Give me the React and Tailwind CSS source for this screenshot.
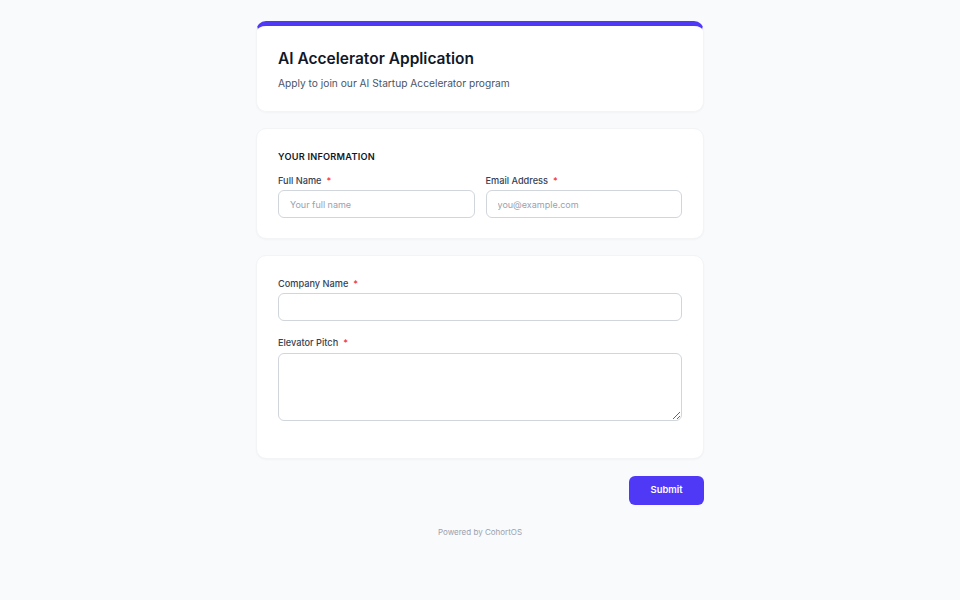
import React from "react";

function Label({ children }) {
  return (
    <label className="block text-[9.2px] font-medium text-gray-700 leading-[12px]">
      {children}
      <span className="text-red-500 ml-[5px]">*</span>
    </label>
  );
}

const inputCls =
  "block w-full h-[28px] rounded-[6px] border border-gray-300 px-[11px] text-[9px] text-gray-900 placeholder:text-gray-400 outline-none bg-white";

export default function App() {
  return (
    <div
      className="min-h-[600px] bg-gray-50 pt-[21px]"
      style={{ fontFamily: "Inter, 'Noto Sans', sans-serif" }}
    >
      <div className="w-[448px] mx-auto">
        <div className="bg-white rounded-[10px] border border-gray-100 border-t-[5px] border-t-indigo-600 shadow-[0_1px_2px_rgba(0,0,0,0.03)] px-[21px] pt-[23px] pb-[21px]">
          <h1 className="text-[15.5px] font-semibold text-gray-900 leading-[20px]">
            AI Accelerator Application
          </h1>
          <p className="text-[10.2px] text-gray-600 mt-[7px] leading-[14px]">
            Apply to join our AI Startup Accelerator program
          </p>
        </div>

        <div className="mt-4 bg-white rounded-[10px] border border-gray-100 shadow-[0_1px_2px_rgba(0,0,0,0.03)] px-[21px] pt-[22px] pb-[20px]">
          <h2 className="text-[9.2px] font-semibold text-gray-900 uppercase tracking-wide leading-[12px]">
            Your Information
          </h2>
          <div className="grid grid-cols-2 gap-[11px] mt-[12px]">
            <div>
              <Label>Full Name</Label>
              <input placeholder="Your full name" className={"mt-[3px] " + inputCls} />
            </div>
            <div>
              <Label>Email Address</Label>
              <input placeholder="you@example.com" className={"mt-[3px] " + inputCls} />
            </div>
          </div>
        </div>

        <div className="mt-4 bg-white rounded-[10px] border border-gray-100 shadow-[0_1px_2px_rgba(0,0,0,0.03)] px-[21px] pt-[22px] pb-[37px]">
          <div>
            <Label>Company Name</Label>
            <input className={"mt-[3px] " + inputCls} />
          </div>
          <div className="mt-[16px]">
            <Label>Elevator Pitch</Label>
            <textarea className="mt-[4px] block w-full h-[68px] rounded-[6px] border border-gray-300 px-[11px] py-2 text-[9px] outline-none" />
          </div>
        </div>

        <div className="flex justify-end mt-[17px]">
          <button className="h-[29px] w-[75px] rounded-[6px] bg-indigo-600 text-white text-[9.4px] font-semibold">
            Submit
          </button>
        </div>

        <p className="text-center text-[8px] leading-[12px] text-gray-400 mt-[21px]">
          Powered by CohortOS
        </p>
      </div>
    </div>
  );
}
